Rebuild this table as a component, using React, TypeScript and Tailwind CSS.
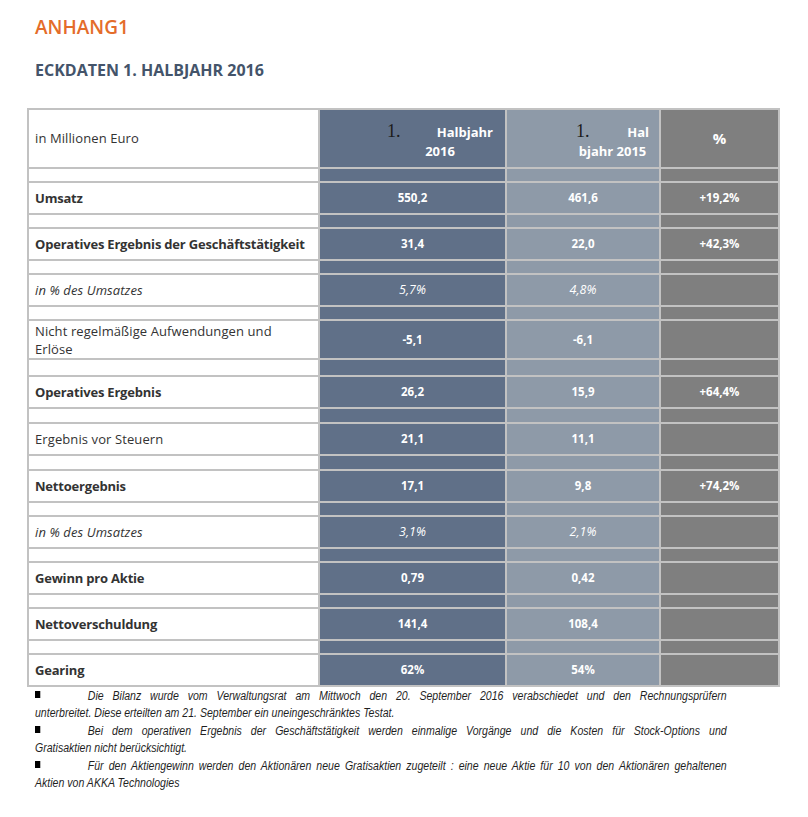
const ROWS = [
  { label: "Umsatz", bold: true, a: "550,2", b: "461,6", c: "+19,2%" },
  { label: "Operatives Ergebnis der Geschäftstätigkeit", bold: true, a: "31,4", b: "22,0", c: "+42,3%" },
  { label: "in % des Umsatzes", italic: true, a: "5,7%", b: "4,8%", c: "" },
  { label: "Nicht regelmäßige Aufwendungen und", label2: "Erlöse", a: "-5,1", b: "-6,1", c: "", tall: true },
  { label: "Operatives Ergebnis", bold: true, a: "26,2", b: "15,9", c: "+64,4%" },
  { label: "Ergebnis vor Steuern", a: "21,1", b: "11,1", c: "" },
  { label: "Nettoergebnis", bold: true, a: "17,1", b: "9,8", c: "+74,2%" },
  { label: "in % des Umsatzes", italic: true, a: "3,1%", b: "2,1%", c: "" },
  { label: "Gewinn pro Aktie", bold: true, a: "0,79", b: "0,42", c: "" },
  { label: "Nettoverschuldung", bold: true, a: "141,4", b: "108,4", c: "" },
  { label: "Gearing", bold: true, a: "62%", b: "54%", c: "" },
];

type Row = (typeof ROWS)[number] & { label2?: string; tall?: boolean; italic?: boolean; bold?: boolean };

const NOTES = [
  [
    "Die Bilanz wurde vom Verwaltungsrat am Mittwoch den 20. September 2016 verabschiedet und den Rechnungsprüfern",
    "unterbreitet. Diese erteilten am 21. September ein uneingeschränktes Testat.",
  ],
  [
    "Bei dem operativen Ergebnis der Geschäftstätigkeit werden einmalige Vorgänge und die Kosten für Stock-Options und",
    "Gratisaktien nicht berücksichtigt.",
  ],
  [
    "Für den Aktiengewinn werden den Aktionären neue Gratisaktien zugeteilt : eine neue Aktie für 10 von den Aktionären gehaltenen",
    "Aktien von AKKA Technologies",
  ],
];

// spacer heights after header / between data rows
const SPACERS = ["h-[12px]", "h-[12px]", "h-[12px]", "h-[12px]", "h-[15px]", "h-[13px]", "h-[13px]", "h-[12px]", "h-[12px]", "h-[12px]", "h-[12px]"];

const Spacer = ({ h }: { h: string }) => (
  <>
    <div className={`bg-white ${h}`} />
    <div className="bg-[#607088]" />
    <div className="bg-[#8e9aa8]" />
    <div className="bg-[#7f7f7f]" />
  </>
);

const DataRow = ({ row }: { row: Row }) => {
  const val = row.italic ? "italic font-normal text-[12.5px]" : "font-bold text-[11.5px]";
  return (
    <>
      <div
        className={`bg-white flex flex-col justify-center pl-[6px] text-[13px] leading-[18px] text-[#333] ${
          row.tall ? "h-[37px]" : "h-[30px]"
        } ${row.bold ? "font-bold tracking-[-0.2px]" : "tracking-[0.1px]"} ${row.italic ? "italic" : ""}`}
      >
        <span>{row.label}</span>
        {row.label2 && <span>{row.label2}</span>}
      </div>
      <div className={`bg-[#607088] flex items-center justify-center text-white ${val}`}>{row.a}</div>
      <div className={`bg-[#8e9aa8] flex items-center justify-center text-white ${val}`}>{row.b}</div>
      <div className="bg-[#7f7f7f] flex items-center justify-center text-[11.5px] font-bold text-white">{row.c}</div>
    </>
  );
};

export default function App() {
  return (
    <div className="w-[808px] min-h-[817px] bg-white pt-[14px] pl-[35px] font-['Open_Sans',sans-serif]">
      <h1 className="text-[19px] leading-[26px] font-semibold text-[#e46c2a]">ANHANG1</h1>
      <h2 className="mt-[19px] text-[16px] leading-[22px] font-bold text-[#44546a]">ECKDATEN 1. HALBJAHR 2016</h2>

      <div className="ml-[-8px] mt-[27px] w-[753px] bg-[#c2c2c2] p-[2px] grid grid-cols-[289px_185px_152px_117px] gap-[2px]">
        {/* header */}
        <div className="bg-white h-[57px] flex items-center pl-[6px] text-[13px] tracking-[0.1px] text-[#333]">in Millionen Euro</div>
        <div className="bg-[#607088] flex items-center justify-end pr-[12px] pt-[6px]">
          <div className="w-[106px] text-white font-bold text-[13px] leading-[19px]">
            <div className="flex justify-between items-baseline">
              <span className="font-['Liberation_Serif',serif] font-normal text-[18px] text-[#1c1c1c]">1.</span>
              <span>Halbjahr</span>
            </div>
            <div className="text-center">2016</div>
          </div>
        </div>
        <div className="bg-[#8e9aa8] flex items-center justify-end pr-[10px] pt-[6px]">
          <div className="w-[73px] text-white font-bold text-[13px] leading-[19px]">
            <div className="flex justify-between items-baseline">
              <span className="font-['Liberation_Serif',serif] font-normal text-[18px] text-[#1c1c1c]">1.</span>
              <span>Hal</span>
            </div>
            <div className="text-center">bjahr 2015</div>
          </div>
        </div>
        <div className="bg-[#7f7f7f] flex items-center justify-center text-[15px] font-bold text-white">%</div>

        {ROWS.map((row, i) => (
          <DataRowGroup key={i} row={row as Row} spacer={SPACERS[i]} />
        ))}
      </div>

      <div className="w-[786px] origin-left scale-x-[0.88] pt-[1px] font-['Liberation_Sans',sans-serif] italic text-[12px] leading-[17px] text-[#1f1f1f]">
        {NOTES.map((n, i) => (
          <div key={i} className={i > 0 ? "mt-[1px]" : ""}>
            <div className="h-[17px] text-justify [text-align-last:justify] whitespace-nowrap">
              <span className="relative top-[-2px] inline-block w-[6px] h-[7px] bg-black mr-[54px] align-baseline" />
              {n[0]}
            </div>
            <div className="h-[17px]">{n[1]}</div>
          </div>
        ))}
      </div>
    </div>
  );
}

const DataRowGroup = ({ row, spacer }: { row: Row; spacer: string }) => (
  <>
    <Spacer h={spacer} />
    <DataRow row={row} />
  </>
);
